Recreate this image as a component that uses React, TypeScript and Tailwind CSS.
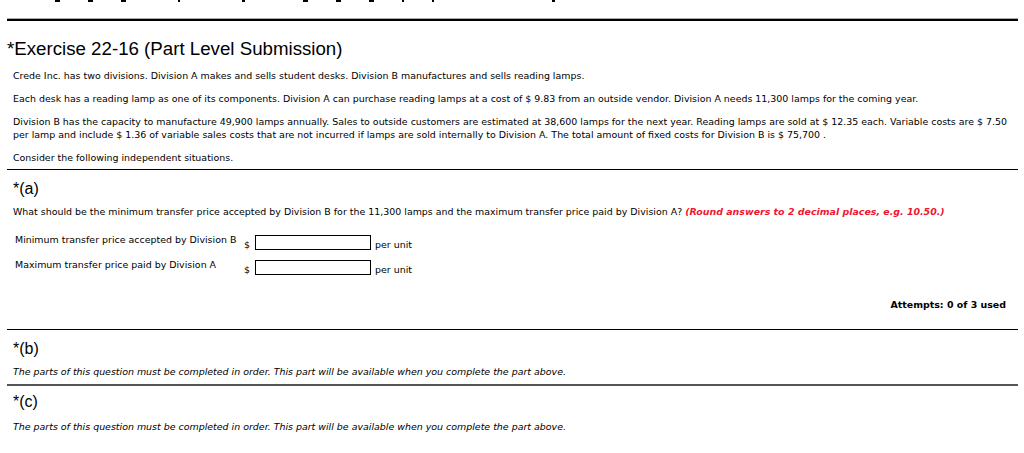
export default function App() {
  const body = 'font-["DejaVu_Sans",Verdana,sans-serif] text-[9.45px] text-black';
  const heading = 'font-["Liberation_Sans",Arial,sans-serif] text-black';

  return (
    <div className="w-[1024px] h-[453px] overflow-hidden bg-white">
      {/* clipped descenders of the line above */}
      <div className="h-[3px] flex items-start pl-[55px] gap-[28px]">
        <span className="w-[5px] h-[2px] bg-black" />
        <span className="w-[5px] h-[2px] bg-black" />
        <span className="w-[5px] h-[2px] bg-black" />
        <span className="ml-[24px] w-[2px] h-[2px] bg-black" />
        <span className="ml-[34px] w-[3px] h-[2px] bg-black" />
        <span className="ml-[30px] w-[5px] h-[2px] bg-black" />
        <span className="w-[5px] h-[2px] bg-black" />
        <span className="w-[5px] h-[2px] bg-black" />
        <span className="w-[2px] h-[2px] bg-black" />
        <span className="w-[2px] h-[2px] bg-black" />
        <span className="ml-[90px] w-[3px] h-[2px] bg-black" />
      </div>

      <div className="mt-[15px] mx-[7px] w-[1011px] border-t border-[#aaa]" />
      <div className="mx-[7px] w-[1011px] border-t-2 border-black" />

      <h1 className={`${heading} text-[18.7px] leading-[24px] ml-[7px] mt-[16px]`}>
        *Exercise 22-16 (Part Level Submission)
      </h1>

      <div className={`${body} ml-[13px] w-[1000px] leading-[13px]`}>
        <p className="mt-[8px]">
          Crede Inc. has two divisions. Division A makes and sells student desks. Division B manufactures and sells reading lamps.
        </p>
        <p className="mt-[10px]">
          Each desk has a reading lamp as one of its components. Division A can purchase reading lamps at a cost of $ 9.83 from an outside vendor. Division A needs 11,300 lamps for the coming year.
        </p>
        <p className="mt-[10px]">
          Division B has the capacity to manufacture 49,900 lamps annually. Sales to outside customers are estimated at 38,600 lamps for the next year. Reading lamps are sold at $ 12.35 each. Variable costs are $ 7.50 per lamp and include $ 1.36 of variable sales costs that are not incurred if lamps are sold internally to Division A. The total amount of fixed costs for Division B is $ 75,700 .
        </p>
        <p className="mt-[10px]">Consider the following independent situations.</p>
      </div>

      <div className="mt-[5px] mx-[7px] w-[1011px] border-t border-black" />

      <h2 className={`${heading} text-[16px] leading-[20px] ml-[13px] mt-[9px]`}>*(a)</h2>

      <p className={`${body} ml-[13px] mt-[6px] leading-[13px]`}>
        What should be the minimum transfer price accepted by Division B for the 11,300 lamps and the maximum transfer price paid by Division A?{' '}
        <span className="font-bold italic text-[#f0162f]">(Round answers to 2 decimal places, e.g. 10.50.)</span>
      </p>

      <div className={`${body} ml-[15px] mt-[15px] flex flex-col gap-[7px]`}>
        <div className="flex items-start">
          <span className="w-[229px] leading-[13px]">Minimum transfer price accepted by Division B</span>
          <span className="mt-[5px] w-[11px] leading-[13px]">$</span>
          <input className="mt-[2px] w-[116px] h-[15px] border border-black bg-white outline-none" />
          <span className="mt-[5px] ml-[4px] leading-[13px]">per unit</span>
        </div>
        <div className="flex items-start">
          <span className="w-[229px] leading-[13px]">Maximum transfer price paid by Division A</span>
          <span className="mt-[5px] w-[11px] leading-[13px]">$</span>
          <input className="mt-[2px] w-[116px] h-[15px] border border-black bg-white outline-none" />
          <span className="mt-[5px] ml-[4px] leading-[13px]">per unit</span>
        </div>
      </div>

      <div className={`${body} font-bold text-right w-[1006px] mt-[22px] leading-[13px]`}>
        Attempts: 0 of 3 used
      </div>

      <div className="mt-[18px] mx-[7px] w-[1011px] border-t border-black" />

      <h2 className={`${heading} text-[16px] leading-[20px] ml-[13px] mt-[9px]`}>*(b)</h2>
      <p className={`${body} italic text-[#555] ml-[13px] mt-[6px] leading-[13px]`}>
        The parts of this question must be completed in order. This part will be available when you complete the part above.
      </p>

      <div className="mt-[6px] mx-[7px] w-[1011px] border-t-2 border-[#555]" />

      <h2 className={`${heading} text-[16px] leading-[20px] ml-[13px] mt-[6px]`}>*(c)</h2>
      <p className={`${body} italic text-[#555] ml-[13px] mt-[8px] leading-[13px]`}>
        The parts of this question must be completed in order. This part will be available when you complete the part above.
      </p>
    </div>
  );
}
